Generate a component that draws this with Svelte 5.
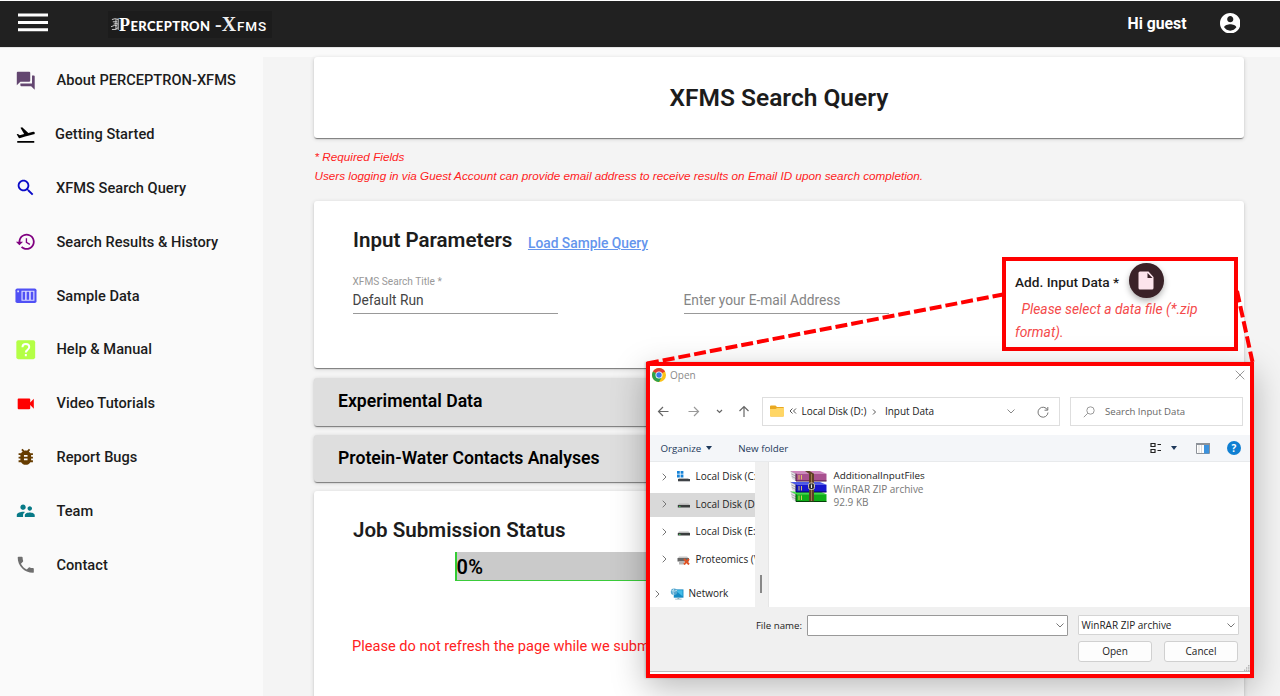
<script>
  const menu = [
    { label: 'About PERCEPTRON-XFMS', color: '#634670', icon: 'M21 6h-2v9H6v2c0 .55.45 1 1 1h11l4 4V7c0-.55-.45-1-1-1zm-4 6V3c0-.55-.45-1-1-1H3c-.55 0-1 .45-1 1v14l4-4h10c.55 0 1-.45 1-1z' },
    { label: 'Getting Started', color: '#000', shift: -1.5, icon: 'M2.5 19h19v2h-19zm19.57-9.36c-.21-.8-1.04-1.28-1.84-1.06L14.92 10l-6.9-6.43-1.93.51 4.14 7.17-4.97 1.33-1.97-1.54-1.45.39 1.82 3.16.77 1.33 1.6-.43 5.31-1.42 4.35-1.16L21 11.49c.81-.23 1.28-1.05 1.07-1.85z' },
    { label: 'XFMS Search Query', color: '#0a0ac8', shift: -0.5, icon: 'M15.5 14h-.79l-.28-.27C15.41 12.59 16 11.11 16 9.5 16 5.91 13.09 3 9.5 3S3 5.91 3 9.5 5.91 16 9.5 16c1.61 0 3.09-.59 4.23-1.57l.27.28v.79l5 4.99L20.49 19l-4.99-5zm-6 0C7.01 14 5 11.99 5 9.5S7.01 5 9.5 5 14 7.01 14 9.5 11.99 14 9.5 14z' },
    { label: 'Search Results & History', color: '#800080', icon: 'M13 3c-4.97 0-9 4.03-9 9H1l3.89 3.89.07.14L9 12H6c0-3.87 3.13-7 7-7s7 3.13 7 7-3.13 7-7 7c-1.93 0-3.68-.79-4.94-2.06l-1.42 1.42C8.27 19.99 10.51 21 13 21c4.97 0 9-4.03 9-9s-4.03-9-9-9zm-1 5v5l4.28 2.54.72-1.21-3.5-2.08V8H12z' },
    { label: 'Sample Data', color: '#5050f5', kind: 'sample' },
    { label: 'Help & Manual', color: '#b4ff46', kind: 'help' },
    { label: 'Video Tutorials', color: '#ff0000', icon: 'M17 10.500V7c0-.55-.45-1-1-1H4c-.55 0-1 .45-1 1v10c0 .55.45 1 1 1h12c.55 0 1-.45 1-1v-3.500l4 4v-11l-4 4z' },
    { label: 'Report Bugs', color: '#663c00', icon: 'M20 8h-2.810c-.45-.78-1.070-1.450-1.820-1.960L17 4.410 15.590 3l-2.170 2.170C12.960 5.060 12.490 5 12 5c-.49 0-.96.06-1.410.17L8.410 3 7 4.410l1.620 1.630C7.880 6.550 7.260 7.220 6.810 8H4v2h2.090c-.05.33-.09.66-.09 1v1H4v2h2v1c0 .34.04.67.09 1H4v2h2.810c1.040 1.790 2.970 3 5.190 3s4.150-1.210 5.190-3H20v-2h-2.090c.05-.33.09-.66.09-1v-1h2v-2h-2v-1c0-.34-.04-.67-.09-1H20V8zm-6 8h-4v-2h4v2zm0-4h-4v-2h4v2z' },
    { label: 'Team', color: '#087a87', icon: 'M16.500 12c1.380 0 2.490-1.120 2.490-2.500S17.880 7 16.500 7C15.120 7 14 8.120 14 9.500s1.120 2.500 2.500 2.500zM9 11c1.660 0 2.990-1.340 2.990-3S10.660 5 9 5C7.340 5 6 6.340 6 8s1.340 3 3 3zm7.500 3c-1.830 0-5.500.92-5.500 2.750V19h11v-2.250c0-1.830-3.670-2.750-5.500-2.750zM9 13c-2.330 0-7 1.170-7 3.500V19h7v-2.250c0-.85.33-2.340 2.370-3.470C10.500 13.100 9.660 13 9 13z' },
    { label: 'Contact', color: '#6f6f6f', icon: 'M6.620 10.790c1.440 2.830 3.760 5.140 6.590 6.590l2.200-2.200c.27-.27.67-.36 1.020-.24 1.120.37 2.330.57 3.570.57.55 0 1 .45 1 1V20c0 .55-.45 1-1 1-9.390 0-17-7.610-17-17 0-.55.45-1 1-1h3.500c.55 0 1 .45 1 1 0 1.250.2 2.450.57 3.570.11.35.03.74-.25 1.020l-2.200 2.200z' }
  ];
  const drives = [
    { label: 'Local Disk (C:)', kind: 'win' },
    { label: 'Local Disk (D:)', kind: 'disk', selected: true },
    { label: 'Local Disk (E:)', kind: 'disk' },
    { label: 'Proteomics (\\\\', kind: 'net' }
  ];
  const books = [
    { y: 20.5, main: '#0fae18', light: '#3ce044', dark: '#054009' },
    { y: 11, main: '#1616cc', light: '#4b59e8', dark: '#050550' },
    { y: 0, main: '#a8508f', light: '#cf86be', dark: '#431238' }
  ];
</script>

<header>
  <svg class="burger" viewBox="0 0 30 20"><path d="M0 2h30M0 9.500h30M0 16.700h30" stroke="#fff" stroke-width="3" /></svg>
  <div class="logo">
    <svg viewBox="0 0 10 16"><path d="M1 2.500q4-2 7 0M2 5h5M3 7.500q3-1 5 0M0 10.500q4-2.500 7-1M1 13.500q4 1 7-2M5.500 2v12M8 1v13" /></svg>
    <b class="p">P</b><span class="name">ERCEPTRON</span><b class="x">-X</b><span class="fms">FMS</span>
  </div>
  <strong>Hi guest</strong>
  <svg class="user" viewBox="2 2 20 20" fill="#fff"><path d="M12 2C6.480 2 2 6.480 2 12s4.480 10 10 10 10-4.480 10-10S17.520 2 12 2zm0 3c1.660 0 3 1.340 3 3s-1.340 3-3 3-3-1.340-3-3 1.340-3 3-3zm0 14.200c-2.500 0-4.710-1.280-6-3.220.03-1.990 4-3.080 6-3.080 1.990 0 5.970 1.090 6 3.080-1.290 1.940-3.500 3.220-6 3.220z" /></svg>
</header>

<div class="page">
  <nav>
    {#each menu as m}
      <a href="#top">
        <svg viewBox="0 0 24 24" fill={m.color}>
          {#if m.kind === 'sample'}
            <rect x="0.500" y="3.800" width="23.500" height="16.400" rx="2" />
            <path d="M7.200 6.500h14.500v11H7.200zM2.500 6h2v2h-2z" fill="#dcdcff" />
            <path d="M8.500 7.500h2.800v9H8.500zM13 7.500h2.800v9H13zM17.600 7.500h2.800v9h-2.800z" />
          {:else if m.kind === 'help'}
            <rect x="1.500" y="1.500" width="21" height="21" rx="2" />
            <path d="M8.300 9.200q0-3.700 3.800-3.700t3.800 3.500q0 1.600-1.900 3.100-1.900 1.300-1.900 3M12.100 16.700v2.500" fill="none" stroke="#fff" stroke-width="2.200" />
          {:else}
            <path d={m.icon} />
          {/if}
        </svg>
        <span style:margin-left="{m.shift ?? 0}px">{m.label}</span>
      </a>
    {/each}
  </nav>

  <main>
    <section class="card hero"><h1>XFMS Search Query</h1></section>
    <p class="notes">* Required Fields<br /><span>Users logging in via Guest Account can provide email address to receive results on Email ID upon search completion.</span></p>
    <section class="card params">
      <div class="heading"><h2>Input Parameters</h2><a href="#top">Load Sample Query</a></div>
      <div class="fields">
        <label class="field"><small>XFMS Search Title *</small><span>Default Run</span></label>
        <label class="field hint"><small>&nbsp;</small><span>Enter your E-mail Address</span></label>
      </div>
    </section>
    <section class="card panel">Experimental Data</section>
    <section class="card panel second">Protein-Water Contacts Analyses</section>
    <section class="card status">
      <h2>Job Submission Status</h2>
      <div class="progress">0%</div>
      <p>Please do not refresh the page while we submit</p>
    </section>
  </main>
</div>

<div class="upload">
  <div class="line">
    <b>Add. Input Data *</b>
    <i class="fab"><svg viewBox="0 0 16 19"><path d="M2 .5h8.500l5 5.500v11a1.500 1.500 0 0 1-1.500 1.500H2A1.500 1.500 0 0 1 .5 17V2A1.500 1.500 0 0 1 2 .5z" fill="#fde4ec" /><path d="M9.500 2v5h5z" fill="#3a2228" /></svg></i>
  </div>
  <em>Please select a data file (*.zip format).</em>
</div>

<div class="dialog">
  <div class="titlebar">
    <svg class="chrome" viewBox="0 0 14 14">
      <circle cx="7" cy="7" r="7" fill="#fbc116" />
      <path d="M7 7 .94 3.500A7 7 0 0 1 13.060 3.500z" fill="#e33b2e" /><path d="M.94 3.500A7 7 0 0 0 7 14l3-5.300L7 7z" fill="#2da14c" /><path d="M7 3.500h6.060L7 5z" fill="#e33b2e" />
      <circle cx="7" cy="7" r="3.500" fill="#fff" /><circle cx="7" cy="7" r="2.700" fill="#3b78e7" />
    </svg>
    <span>Open</span>
    <svg class="close" viewBox="0 0 10 10"><path d="M.7.7l8.600 8.600M9.300.7.7 9.300" /></svg>
  </div>
  <div class="address">
    <svg class="arrows" viewBox="0 0 104 14" fill="none" stroke="#666" stroke-width="1.200">
      <path d="M11.500 7.500H1.500M6 3 1.500 7.500 6 12" /><path d="M31.500 7.500h10M37 3l4.500 4.500L37 12" stroke="#999" /><path d="M60 6l2.500 2.500L65 6" /><path d="M87 13V2.500M82.500 7 87 2.500 91.500 7" />
    </svg>
    <div class="path">
      <svg class="folder" viewBox="0 0 14 12"><path d="M0 1.500Q0 .5 1 .5h4.500L7 2h6q1 0 1 1v7.500q0 1-1 1H1q-1 0-1-1z" fill="#e9a820" /><path d="M0 4h5.500L7 3h7v7.500q0 1-1 1H1q-1 0-1-1z" fill="#ffd665" /></svg>
      <svg class="back" viewBox="0 0 8 6"><path d="M3.500.5 1 3l2.500 2.500M7 .5 4.500 3 7 5.500" /></svg>
      <span>Local Disk (D:)</span>
      <svg class="sep" viewBox="0 0 5 6"><path d="M1 .5 3.500 3 1 5.500" /></svg>
      <span>Input Data</span>
      <svg class="down" viewBox="0 0 8 5"><path d="M.5.5 4 4 7.500.5" /></svg>
      <svg class="reload" viewBox="0 0 12 12"><path d="M10.500 4A5 5 0 1 0 11 6.500M10.800 1v3.200H7.500" /></svg>
    </div>
    <div class="search"><svg viewBox="0 0 12 12"><circle cx="7.500" cy="4.500" r="3.700" /><path d="M4.800 7.200.8 11.200" /></svg><span>Search Input Data</span></div>
  </div>
  <div class="tools">
    <span>Organize</span><i class="tri"></i><span class="new">New folder</span>
    <svg class="view" viewBox="0 0 12 12"><path d="M1 1.500h4v3H1zM1 7.500h4v3H1z" fill="none" stroke="#222" stroke-width="1.200" /><path d="M7.500 2.500H11M7.500 8.500H11" stroke="#222" stroke-width="1.200" /></svg>
    <i class="tri"></i>
    <svg class="pane" viewBox="0 0 14 11"><path d="M.5.5h13v10H.5z" fill="#fff" stroke="#8d9299" /><path d="M0 0h14v2H0z" fill="#8d9299" /><path d="M8 2h5v8.500H8z" fill="#3c92dd" /><path d="M3 2v8M5.500 2v8" stroke="#ccc" stroke-width=".7" /></svg>
    <b class="q">?</b>
  </div>
  <div class="browser">
    <div class="tree">
      {#each drives as d}
        <div class="drive" class:selected={d.selected}>
          <svg class="chev" viewBox="0 0 5 8"><path d="M.7.7 4 4 .7 7.300" /></svg>
          <svg class="ico" viewBox="0 0 14 12">
            {#if d.kind === 'win'}
              <path d="M0 0h2.800v2.800H0zM3.600 0h2.800v2.800H3.600zM0 3.600h2.800v2.800H0zM3.600 3.600h2.800v2.800H3.600z" fill="#1683d8" /><path d="M2 7h9l1.500 1.500H1z" fill="#bbb" /><path d="M1 8h12v2.300H1z" fill="#3e4246" />
            {:else if d.kind === 'disk'}
              <path d="M2 5.500h9.500L13 7H.8z" fill="#b9b9b9" /><path d="M.8 7H13v2.500H.8z" fill="#3a3d3d" /><path d="M2 8h1.500v1H2z" fill="#3ac453" />
            {:else}
              <path d="M2 3.500h8l1.500 1.500H1z" fill="#c8c8c8" /><path d="M.5 5h11.500v3.500H.5z" fill="#666" /><path d="M2 8.500h5v3H2z" fill="#b5b5b5" /><path d="M7 6l5 5.500M12 6l-5 5.500" stroke="#de5325" stroke-width="1.900" />
            {/if}
          </svg>
          <span>{d.label}</span>
        </div>
      {/each}
      <div class="drive network">
        <svg class="chev" viewBox="0 0 5 8"><path d="M.7.7 4 4 .7 7.300" /></svg>
        <svg class="ico" viewBox="0 0 14 13"><path d="M3.500 1.500H14v9H3.500z" fill="#168bc4" /><path d="M5 2.500h8V9z" fill="#43bce8" /><path d="M7.500 10.500h2v1.200h2.500v.8H5v-.8h2.500z" fill="#8cabb8" /><circle cx="3.800" cy="4" r="3.500" fill="#58a7cf" /><path d="M1 2.500q3 2 6 0M3.500.5q-2 3.500 0 7" stroke="#cdeaf5" fill="none" stroke-width=".8" /></svg>
        <span>Network</span>
      </div>
    </div>
    <div class="gutter"><i></i></div>
    <div class="files">
      <svg class="rar" viewBox="0 0 37 31">
        {#each books as b}
          <g transform="translate(0 {b.y})">
            <path d="M.5 0 6 2.500v7.700L2 8z" fill="#e2dfe6" /><path d="M.5 0 6 2.800M1.500 3 6 5.200M1.700 5.400 6 7.500" stroke="#777" stroke-width=".5" />
            <path d="M.5 0H30l6.500 2.700H6z" fill={b.light} /><path d="M6 2.700h30.500v7.300H6z" fill={b.main} /><path d="M6 2.700v7.300h30.500" fill="none" stroke={b.dark} stroke-width="1" /><path d="M9 4v4.500M11.500 4v4.500" stroke="#e6d05c" stroke-width=".9" />
          </g>
        {/each}
        <path d="M15 0h4.500l4.500 2.800v27.500H19V2.800z" fill="#5e4026" /><path d="M21.500 3v27" stroke="#a17c4c" /><rect x="18.500" y="12" width="6" height="6.500" rx="2" fill="#333" stroke="#c9c2b0" /><path d="M21.500 13.500v3.500" stroke="#eee" />
      </svg>
      <div class="meta"><span>AdditionalInputFiles</span><span>WinRAR ZIP archive</span><span>92.9 KB</span></div>
    </div>
  </div>
  <div class="footer">
    <span class="fn">File name:</span>
    <div class="input"><svg viewBox="0 0 8 5"><path d="M.5.5 4 4 7.500.5" /></svg></div>
    <div class="input select"><span>WinRAR ZIP archive</span><svg viewBox="0 0 8 5"><path d="M.5.5 4 4 7.500.5" /></svg></div>
    <button>Open</button><button class="cancel">Cancel</button>
  </div>
  <svg class="grip" viewBox="0 0 6 6"><path d="M4 0h1.500v1.500H4zM4 2.200h1.500v1.500H4zM4 4.400h1.500v1.500H4zM2 2.200h1.300v1.500H2zM2 4.400h1.300v1.500H2zM0 4.400h1.300v1.500H0z" fill="#b5b5b5" /></svg>
</div>

<svg class="links" viewBox="0 0 1280 696" fill="none" stroke="#f00" stroke-width="4">
  <path d="M647 363.500 1003 294.500" stroke-dasharray="12 4" /><path d="M1237 291l15.500 71" stroke-dasharray="11.500 4" />
</svg>

<style>
  :global(body) { background: #f4f4f4; overflow: hidden; }
  :global(#app) { position: relative; height: 696px; overflow: hidden; font-family: Roboto, sans-serif; color: #1c1c1c; }
  h1, h2, p { margin: 0; font-weight: 600; }
  svg { display: block; flex: none; }
  header { box-sizing: border-box; height: 47px; border-top: 1px solid #fff; background: #212121; display: flex; align-items: center; padding: 0 40px 2px 18px; color: #fff; }
  .burger { width: 30px; height: 20px; }
  .logo { display: flex; align-items: baseline; width: 164px; height: 27px; margin: 2px 0 0 60px; padding-left: 3px; box-sizing: border-box; background: #1c1c1c; line-height: 27px; white-space: nowrap; }
  .logo svg { width: 9px; height: 15px; align-self: center; fill: none; stroke: #ddd; stroke-width: 1; }
  .p { font: 700 18px/26px "Liberation Serif", serif; margin-left: -1px; width: 11.500px; }
  .name { font: 900 13px/26px Lato, sans-serif; width: 84.500px; letter-spacing: .35px; }
  .x { font: 700 20px/26px "Liberation Serif", serif; color: #eee; }
  .fms { font: 500 13.500px/26px Roboto, sans-serif; letter-spacing: .8px; margin-left: 1px; }
  header strong { margin-left: auto; font-size: 15.750px; }
  .user { width: 20.500px; height: 20.500px; margin-left: 33px; }

  .page { display: flex; height: 649px; border-top: 1px solid #e4e4e4; box-sizing: border-box; background: linear-gradient(#fafafa 9px, #f4f4f4 9px); }
  nav { width: 263px; background: #fafafa; padding-top: 5.600px; box-sizing: border-box; flex: none; }
  nav a { height: 53.800px; display: flex; align-items: center; padding-left: 15px; color: #1c1c1c; text-decoration: none; font-size: 14.600px; font-weight: 500; letter-spacing: .02px; }
  nav svg { width: 21.500px; height: 21.500px; margin-right: 20px; }

  main { margin: 9px 0 0 51px; width: 930px; }
  .card { box-sizing: border-box; background: #fff; border-radius: 3px; box-shadow: 0 2px 1px -1px rgba(0,0,0,.3), 0 1px 1px rgba(0,0,0,.2), 0 1px 4px rgba(0,0,0,.16); }
  .hero { height: 81px; display: flex; align-items: center; justify-content: center; }
  h1 { font-size: 24.500px; }
  .notes { margin: 8.500px 0 16.500px; height: 38px; font: italic 11.730px/19px "Liberation Sans", sans-serif; color: #f22; padding-left: .5px; }
  .params { height: 167px; padding: 24px 38.500px 0; }
  .heading { display: flex; align-items: baseline; gap: 15.500px; padding-left: .5px; }
  h2 { font-size: 20.550px; line-height: 30px; }
  .heading a { font-size: 13.800px; font-weight: 500; color: #6495ed; text-underline-offset: 1px; position: relative; top: 1px; }
  .fields { display: flex; gap: 126px; margin-top: 20px; }
  .field { width: 205px; height: 39px; border-bottom: 1px solid #999; display: flex; flex-direction: column; box-sizing: border-box; }
  .field small { font-size: 10.150px; line-height: 13px; color: #999; }
  .field span { font-size: 13.750px; line-height: 25px; color: #444; white-space: nowrap; }
  .field.hint span { color: #858585; }
  .panel { height: 47.500px; margin-top: 10px; background: #dedede; padding-left: 24px; font-size: 17.640px; line-height: 46px; font-weight: 600; color: #000; }
  .second { margin-top: 9px; }
  .status { height: 260px; margin-top: 8.500px; padding: 24px 38.500px; }
  .status h2 { padding-left: .5px; }
  .progress { box-sizing: border-box; height: 29px; width: 650px; margin: 7px 0 0 102px; background: #cacaca; border-bottom: 1px solid #3acb3a; border-left: 2px solid #3c3; font-size: 20px; font-weight: 600; line-height: 31px; letter-spacing: .4px; color: #000; }
  .status p { font-size: 14.600px; font-weight: 400; line-height: 20px; color: #f22; margin-top: 55px; margin-left: -.5px; white-space: nowrap; }

  .upload { position: absolute; left: 1002px; top: 257px; width: 236px; height: 94px; box-sizing: border-box; border: 4px solid #f00; background: #fff; padding: 2px 9px; }
  .line { display: flex; align-items: center; height: 35px; gap: 10px; }
  .line b { font-size: 13.700px; font-weight: 500; padding-top: 3px; }
  .fab { width: 34.500px; height: 34.500px; border-radius: 50%; background: #3a2228; display: flex; align-items: center; justify-content: center; box-shadow: 0 3px 6px rgba(0,0,0,.3); }
  .fab svg { width: 16px; height: 19px; }
  .upload em { display: block; font-size: 13.830px; line-height: 23px; color: #f44a4a; text-indent: 6.500px; }

  .dialog { position: absolute; left: 646px; top: 362px; width: 608px; height: 316px; box-sizing: border-box; border: 4px solid #f00; background: #fff; box-shadow: 0 10px 32px rgba(0,0,0,.28), -1px 0 2px rgba(0,0,0,.2); font: 10px/13px "Open Sans", sans-serif; color: #222; white-space: nowrap; }
  .titlebar { height: 18px; display: flex; align-items: center; padding: 0 5px 0 2px; color: #8a8a8a; }
  .chrome { width: 14px; height: 14px; margin-right: 4px; }
  .close { width: 10px; height: 10px; margin-left: auto; fill: none; stroke: #999; }
  .address { height: 51px; display: flex; align-items: center; padding-left: 7px; box-sizing: border-box; padding-top: 4px; }
  .arrows { width: 104px; height: 14px; margin-right: 1px; margin-bottom: 1px; }
  .path, .search { height: 29px; border: 1px solid #dedede; box-sizing: border-box; display: flex; align-items: center; }
  .path { width: 298px; padding-left: 7px; }
  .folder { width: 14px; height: 12px; margin-right: 4.500px; margin-bottom: 2px; }
  .back { width: 8px; height: 6px; margin-right: 5px; margin-bottom: 2px; }
  .sep { width: 5px; height: 6px; margin: 0 7.500px 0 6px; }
  .back, .sep, .down, .reload, .chev, .input svg { fill: none; stroke: #555; }
  .down { width: 8px; height: 5px; margin-left: auto; stroke: #888; }
  .reload { width: 12px; height: 12px; margin: 0 10px 0 22px; stroke: #777; }
  .search { width: 173px; margin-left: 10px; color: #666; padding-left: 12px; gap: 10px; font-size: 9.600px; }
  .search svg { width: 12px; height: 12px; fill: none; stroke: #999; }
  .tools { height: 27px; box-sizing: border-box; background: #f4f6f9; border-bottom: 1px solid #e8eaec; display: flex; align-items: center; padding: 0 9px 0 10.500px; color: #1e395b; font-size: 9.750px; }
  .tri { border: 3.500px solid transparent; border-top: 4px solid #1e395b; border-bottom: 0; margin-left: 5px; }
  .new { margin-left: 26px; }
  .view { width: 12px; height: 12px; margin-left: auto; margin-right: 4px; }
  .pane { width: 14px; height: 11px; margin: 0 17px 0 19px; }
  .q { width: 14px; height: 14px; border-radius: 50%; background: #0f7fd2; color: #fff; text-align: center; line-height: 14px; font-size: 10px; }
  .browser { height: 145px; display: flex; }
  .tree { width: 104.500px; overflow: hidden; padding-top: 1px; box-sizing: border-box; }
  .drive { height: 27.500px; display: flex; align-items: center; padding-left: 12px; }
  .drive.selected { background: linear-gradient(#d9d9d9, #d9d9d9) 0 2px / 100% 24px no-repeat; }
  .chev { width: 5px; height: 8px; margin-right: 10px; stroke: #777; }
  .ico { width: 14px; height: 12px; margin-right: 4.500px; }
  .network { padding-left: 5px; margin-top: 7px; }
  .gutter { width: 13.500px; background: #f0f0f0; border-right: 1px solid #e6e6e6; display: flex; justify-content: center; align-items: flex-end; }
  .gutter i { width: 2px; height: 18px; background: #888; margin-bottom: 14px; }
  .files { display: flex; padding: 7px 0 0 21px; align-items: flex-start; }
  .rar { width: 37px; height: 31px; margin: 2px 6.500px 0 0; }
  .meta { display: flex; flex-direction: column; line-height: 13.600px; color: #777; }
  .meta span:first-child { color: #222; font-size: 9.830px; }
  .footer { height: 65px; background: #f0f0f0; border-bottom: 1px solid #bbb; display: grid; grid-template-columns: 152px 261px 10px 74px 12px 75px; grid-template-rows: 22px 22px; row-gap: 4px; padding: 7px 0 0 0; box-sizing: border-box; align-items: center; }
  .fn { text-align: right; font-size: 9.700px; }
  .input { margin-left: 5px; width: 261px; height: 21px; box-sizing: border-box; border: 1px solid #999; background: #fff; display: flex; align-items: center; justify-content: flex-end; padding-right: 3px; border-radius: 1px; }
  .input svg { width: 8px; height: 5px; stroke: #777; }
  .select { grid-column: 4 / 7; width: 161px; height: 20px; justify-content: space-between; border-color: #d4d4d4; padding-left: 2.500px; }
  button { grid-column: 4; height: 21px; width: 74px; margin-left: 5px; box-sizing: border-box; border: 1px solid #d0d0d0; border-radius: 3px; background: #fdfdfd; font: inherit; color: #222; padding: 0; }
  .cancel { grid-column: 6; }
  .grip { position: absolute; right: 0; bottom: 3px; width: 6px; height: 6px; }
  .links { position: absolute; left: 0; top: 0; width: 1280px; height: 696px; pointer-events: none; }
</style>
